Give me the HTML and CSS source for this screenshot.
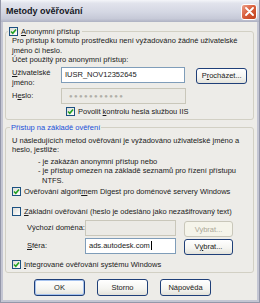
FILE: index.html
```html
<!DOCTYPE html>
<html>
<head>
<meta charset="utf-8">
<link rel="stylesheet" href="styles.css">
</head>
<body>
<div class="window">
  <div class="titlebar">
    <span class="title">Metody ověřování</span>
    <span class="close"><svg width="9" height="9" viewBox="0 0 9 9"><path d="M1 1 L8 8 M8 1 L1 8" stroke="#fff" stroke-width="1.8" stroke-linecap="round"/></svg></span>
  </div>
  <div class="client">
    <fieldset class="group g1">
      <legend class="cblegend"><span class="box checked"><svg width="7" height="7" viewBox="0 0 7 7"><path d="M1 3.5 L2.8 5.3 L6 1.6" fill="none" stroke="#21a121" stroke-width="1.6"/></svg></span><span><u>A</u>nonymní přístup</span></legend>
      <p class="txt">Pro přístup k tomuto prostředku není vyžadováno žádné uživatelské<br>jméno či heslo.</p>
      <p class="txt">Účet použitý pro anonymní přístup:</p>
      <div class="row r1">
        <div class="lbl lbl2"><u>U</u>živatelské<br>jméno:</div>
        <div class="input wide">IUSR_NOV12352645</div>
        <div class="btn browse">P<u>r</u>ocházet...</div>
      </div>
      <div class="row r2">
        <div class="lbl lbl1">H<u>e</u>slo:</div>
        <div class="input wide disabled"><span class="dots">●●●●●●●●●●●</span></div>
      </div>
      <div class="cbrow iis"><span class="box checked"><svg width="7" height="7" viewBox="0 0 7 7"><path d="M1 3.5 L2.8 5.3 L6 1.6" fill="none" stroke="#21a121" stroke-width="1.6"/></svg></span><span>Povolit <u>k</u>ontrolu hesla službou IIS</span></div>
    </fieldset>
    <fieldset class="group g2">
      <legend class="tlegend">Přístup na základě ověření</legend>
      <p class="txt">U následujících metod ověřování je vyžadováno uživatelské jméno a<br>heslo, jestliže:</p>
      <p class="txt list">- je zakázán anonymní přístup nebo<br>- je přístup omezen na základě seznamů pro řízení přístupu<br><span class="ntfs">NTFS.</span></p>
      <div class="cbrow digest"><span class="box checked"><svg width="7" height="7" viewBox="0 0 7 7"><path d="M1 3.5 L2.8 5.3 L6 1.6" fill="none" stroke="#21a121" stroke-width="1.6"/></svg></span><span>Ověřování algorit<u>m</u>em Digest pro doménové servery Windows</span></div>
      <div class="cbrow basic"><span class="box"></span><span><u>Z</u>ákladní ověřování (heslo je odesláno jako nezašifrovaný text)</span></div>
      <div class="row r3">
        <div class="lbl lbl3">Výchozí doména:</div>
        <div class="input narrow disabled"></div>
        <div class="btn pick disabled">Vybrat...</div>
      </div>
      <div class="row r4">
        <div class="lbl lbl3"><u>S</u>féra:</div>
        <div class="input narrow">ads.autodesk.com<span class="caret"></span></div>
        <div class="btn pick">V<u>y</u>brat...</div>
      </div>
      <div class="cbrow integ"><span class="box checked"><svg width="7" height="7" viewBox="0 0 7 7"><path d="M1 3.5 L2.8 5.3 L6 1.6" fill="none" stroke="#21a121" stroke-width="1.6"/></svg></span><span><u>I</u>ntegrované ověřování systému Windows</span></div>
    </fieldset>
    <div class="buttons">
      <div class="btn dlg default">OK</div>
      <div class="btn dlg">Storno</div>
      <div class="btn dlg">Nápověda</div>
    </div>
  </div>
</div>
</body>
</html>
```
FILE: styles.css
```css
* { box-sizing: border-box; }
html, body { margin: 0; padding: 0; }
body {
  width: 260px;
  height: 303px;
  overflow: hidden;
  font-family: "Liberation Sans", Arial, sans-serif;
  font-size: 7.5px;
  color: #1a1a1a;
}
u { text-decoration: underline; text-underline-offset: 1px; }
.window {
  width: 260px;
  height: 303px;
  display: flex;
  flex-direction: column;
  background: #c4c6d3;
  border: 1px solid #9497a9;
  border-top: none;
}
.titlebar {
  height: 22px;
  flex: none;
  display: flex;
  align-items: center;
  justify-content: space-between;
  padding: 0 2px 0 5px;
  background: linear-gradient(#f4f5f9 0%, #e1e3ec 15%, #d4d7e3 55%, #c6c9d7 85%, #adb1c2 100%);
}
.title {
  font-weight: bold;
  font-size: 9px;
  color: #15171f;
}
.close {
  width: 16px;
  height: 16px;
  border: 1px solid #fff;
  border-radius: 3px;
  background: linear-gradient(135deg, #eda08a 0%, #d9603e 45%, #c1401b 100%);
  display: flex;
  align-items: center;
  justify-content: center;
  margin-top: 1px;
}
.client {
  flex: 1;
  margin: 0 2px 2px 2px;
  background: #edece8;
  padding: 4px 3px 0 2px;
  display: flex;
  flex-direction: column;
}
.group {
  margin: 0;
  border: 1px solid #d2d0c4;
  border-radius: 3px;
  padding: 0 6px 2px 6px;
  min-width: 0;
}
.cblegend {
  display: flex;
  align-items: center;
  gap: 3px;
  padding: 0 2px 0 1px;
  margin-left: -4px;
  height: 10px;
}
.tlegend {
  color: #1a4fd8;
  padding: 0 1px;
  margin-left: -2px;
  line-height: 10px;
}
.txt {
  margin: 0;
  line-height: 9.5px;
  white-space: nowrap;
}
.box {
  width: 9px;
  height: 9px;
  border: 1px solid #1c5180;
  background: linear-gradient(135deg, #dcdcd7, #fff);
  display: inline-flex;
  align-items: center;
  justify-content: center;
  flex: none;
}
.row {
  display: flex;
  align-items: flex-start;
}
.lbl { flex: none; line-height: 9.5px; }
.lbl2 { width: 49px; padding-top: 1.5px; }
.lbl1 { width: 49px; padding-top: 3px; }
.lbl3 { width: 73px; padding-left: 15px; padding-top: 3px; }
.input {
  height: 16px;
  border: 1px solid #7f9db9;
  background: #fff;
  padding: 0 3px;
  line-height: 14px;
  white-space: nowrap;
  display: flex;
  align-items: center;
}
.input.disabled { background: #ebeae5; border-color: #c9c7ba; }
.wide { width: 125px; }
.narrow { width: 91px; }
.dots { color: #b0afa8; font-size: 6px; letter-spacing: 1.4px; padding-left: 4px; }
.caret { display: inline-block; width: 1px; height: 9px; background: #000; margin-left: 1px; }
.r1 { margin-top: 2px; }
.r2 { margin-top: 0.5px; }
.btn {
  height: 16px;
  border: 1px solid #1f3f78;
  border-radius: 3px;
  background: linear-gradient(#ffffff 0%, #f4f4f0 60%, #e3e2da 100%);
  display: flex;
  align-items: center;
  justify-content: center;
  white-space: nowrap;
}
.btn.disabled { border-color: #c9c7ba; color: #aca899; background: #f5f4ea; }
.browse { width: 51px; margin-left: 11px; margin-top: 1px; }
.pick { width: 49px; margin-left: 8px; margin-top: 1px; }
.cbrow {
  display: flex;
  align-items: center;
  gap: 3px;
  height: 10px;
  white-space: nowrap;
}
.iis { margin-top: 3px; margin-left: 54px; }
.g2 { margin-top: 3px; padding-bottom: 2px; }
.g2 > .txt:first-of-type { margin-top: 3px; }
.list { margin-top: 2px; padding-left: 26px; }
.ntfs { padding-left: 4px; }
.digest { margin-top: 1px; }
.basic { margin-top: 10px; }
.r3 { margin-top: 4px; }
.r4 { margin-top: 0.5px; }
.integ { margin-top: 5px; }
.buttons {
  display: flex;
  justify-content: center;
  gap: 12px;
  margin-top: 6px;
  padding-right: 14px;
}
.dlg { width: 51px; height: 17px; }
.dlg.default { border-color: #1f3f78; box-shadow: inset 0 0 0 1px #a6c3ef; }
```
